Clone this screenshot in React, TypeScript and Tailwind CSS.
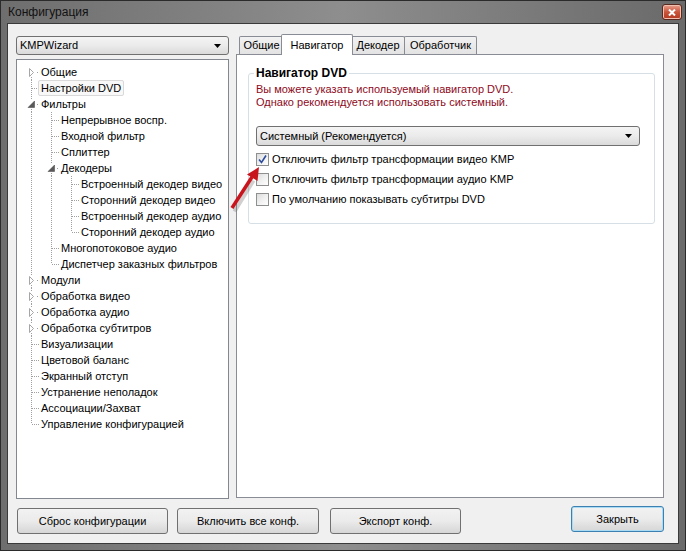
import React from 'react';

type Row = { label: string; level: number; expander?: 'open' | 'closed'; selected?: boolean };

const rows: Row[] = [
  { label: 'Общие', level: 0, expander: 'closed' },
  { label: 'Настройки DVD', level: 0, selected: true },
  { label: 'Фильтры', level: 0, expander: 'open' },
  { label: 'Непрерывное воспр.', level: 1 },
  { label: 'Входной фильтр', level: 1 },
  { label: 'Сплиттер', level: 1 },
  { label: 'Декодеры', level: 1, expander: 'open' },
  { label: 'Встроенный декодер видео', level: 2 },
  { label: 'Сторонний декодер видео', level: 2 },
  { label: 'Встроенный декодер аудио', level: 2 },
  { label: 'Сторонний декодер аудио', level: 2 },
  { label: 'Многопотоковое аудио', level: 1 },
  { label: 'Диспетчер заказных фильтров', level: 1 },
  { label: 'Модули', level: 0, expander: 'closed' },
  { label: 'Обработка видео', level: 0, expander: 'closed' },
  { label: 'Обработка аудио', level: 0, expander: 'closed' },
  { label: 'Обработка субтитров', level: 0, expander: 'closed' },
  { label: 'Визуализации', level: 0 },
  { label: 'Цветовой баланс', level: 0 },
  { label: 'Экранный отступ', level: 0 },
  { label: 'Устранение неполадок', level: 0 },
  { label: 'Ассоциации/Захват', level: 0 },
  { label: 'Управление конфигурацией', level: 0 },
];

// does row i have a later sibling at the same level?
function hasNext(i: number) {
  const lvl = rows[i].level;
  for (let j = i + 1; j < rows.length; j++) {
    if (rows[j].level < lvl) return false;
    if (rows[j].level === lvl) return true;
  }
  return false;
}

function ancestorAt(i: number, lvl: number) {
  for (let j = i - 1; j >= 0; j--) if (rows[j].level === lvl) return j;
  return -1;
}

const dot = '#a0a0a0';

function Guide({ on }: { on: boolean }) {
  return (
    <svg width="20" height="16" className="shrink-0">
      {on && <line x1="10.5" y1="0" x2="10.5" y2="16" stroke={dot} strokeDasharray="1 1" />}
    </svg>
  );
}

function Connector({ i }: { i: number }) {
  const r = rows[i];
  const next = hasNext(i);
  const top = i > 0;
  return (
    <svg width="20" height="16" className="shrink-0">
      {top && !r.expander && <line x1="10.5" y1="0" x2="10.5" y2="8" stroke={dot} strokeDasharray="1 1" />}
      {top && r.expander && <line x1="10.5" y1="0" x2="10.5" y2="3" stroke={dot} strokeDasharray="1 1" />}
      {next && <line x1="10.5" y1={r.expander ? 13 : 8} x2="10.5" y2="16" stroke={dot} strokeDasharray="1 1" />}
      {r.expander ? (
        <line x1="16" y1="8.5" x2="18" y2="8.5" stroke={dot} strokeDasharray="1 1" />
      ) : (
        <line x1="11" y1="8.5" x2="18" y2="8.5" stroke={dot} strokeDasharray="1 1" />
      )}
      {r.expander === 'closed' && <path d="M8.5 4.5 L12.5 8.5 L8.5 12.5 Z" fill="white" stroke="#a6a6a6" />}
      {r.expander === 'open' && <path d="M13.5 5 L13.5 11.5 L7 11.5 Z" fill="#595959" stroke="#404040" strokeWidth="0.5" />}
    </svg>
  );
}

function Tree() {
  return (
    <div className="mt-[4px] flex-1 border border-[#828790] bg-white pl-[4px] pt-[4px]">
      {rows.map((r, i) => (
        <div key={i} className="flex h-[16px] items-center">
          {Array.from({ length: r.level }).map((_, l) => (
            <Guide key={l} on={hasNext(ancestorAt(i, l))} />
          ))}
          <Connector i={i} />
          <span
            className={`-ml-[3px] whitespace-nowrap rounded-[2px] border px-[2px] leading-[14px] ${
              r.selected ? 'border-[#d9d9d9] bg-[#f8f8f8]' : 'border-transparent'
            }`}
          >
            {r.label}
          </span>
        </div>
      ))}
    </div>
  );
}

function Combo({ text, className }: { text: string; className: string }) {
  return (
    <div
      className={`flex items-center justify-between rounded-[3px] border border-[#707070] bg-gradient-to-b from-[#f4f4f4] via-[#ebebeb] to-[#dadada] pl-[3px] pr-[7px] ${className}`}
    >
      <span>{text}</span>
      <svg width="7" height="4">
        <path d="M0 0 H7 L3.5 4 Z" fill="#000" />
      </svg>
    </div>
  );
}

function Check({ checked, label }: { checked?: boolean; label: string }) {
  return (
    <div className="flex h-[20px] items-center">
      <div className="relative h-[13px] w-[13px] border border-[#8e8f8f] bg-gradient-to-br from-[#dcdcdc] via-[#f0f0f0] to-white">
        {checked && (
          <svg width="11" height="11" className="absolute left-0 top-0">
            <path d="M2 5.5 L4.5 8.5 L9 1.5" fill="none" stroke="#2c4c9c" strokeWidth="1.6" />
          </svg>
        )}
      </div>
      <span className="ml-[3px]">{label}</span>
    </div>
  );
}

function Tab({ label, active, w }: { label: string; active?: boolean; w: string }) {
  if (active)
    return (
      <div className={`relative z-10 -mx-[2px] -mb-px flex h-[21px] items-start justify-center rounded-t-[2px] border border-b-0 border-[#898c95] bg-white pt-[2px] ${w}`}>
        {label}
      </div>
    );
  return (
    <div className={`-mr-px mt-[2px] flex h-[18px] items-center justify-center rounded-t-[2px] border border-b-0 border-[#898c95] bg-gradient-to-b from-[#f2f2f2] to-[#e3e3e3] ${w}`}>
      {label}
    </div>
  );
}

function Button({ label, w, focus }: { label: string; w: string; focus?: boolean }) {
  return (
    <div
      className={`flex h-[26px] items-center justify-center rounded-[3px] border bg-gradient-to-b from-[#f2f2f2] via-[#ebebeb] to-[#d6d6d6] ${
        focus ? 'border-[#3c7fb1] shadow-[inset_0_0_0_1px_#a9dcf4]' : 'border-[#707070]'
      } ${w}`}
    >
      {label}
    </div>
  );
}

export default function App() {
  return (
    <div className="relative flex h-[551px] w-[686px] flex-col border border-[#2b2b2b] bg-gradient-to-r from-[#6e6e6e] via-[#8e8e8e] to-[#6a6a6a] font-['Liberation_Sans',Arial,sans-serif] text-[11px] text-black">
      {/* title bar */}
      <div className="flex h-[22px] shrink-0 items-center justify-between pl-[7px] pr-[3px]">
        <span className="text-[12px] text-[#111]">Конфигурация</span>
        <div className="flex h-[16px] w-[20px] items-center justify-center rounded-[3px] border border-[#5a2a20] bg-gradient-to-b from-[#e8a090] via-[#c9553a] to-[#b33a22] shadow-[inset_0_0_0_1px_#f0c0b0]">
          <svg width="8" height="7">
            <path d="M1 0.5 L7 6.5 M7 0.5 L1 6.5" stroke="white" strokeWidth="2" />
          </svg>
        </div>
      </div>

      {/* body */}
      <div className="mx-[6px] mb-[6px] flex flex-1 flex-col border border-[#3a3a3a] bg-[#f0f0f0] pr-[14px] pt-[10px]">
        <div className="flex h-[465px]">
          {/* left column */}
          <div className="ml-[8px] mt-[2px] flex w-[213px] flex-col">
            <Combo text="KMPWizard" className="h-[19px]" />
            <Tree />
          </div>

          {/* right: tabs */}
          <div className="ml-[7px] flex flex-1 flex-col">
            <div className="flex h-[20px] pl-[3px]">
              <Tab label="Общие" w="w-[45px]" />
              <Tab label="Навигатор" active w="w-[72px]" />
              <Tab label="Декодер" w="w-[54px]" />
              <Tab label="Обработчик" w="w-[73px]" />
            </div>
            <div className="mb-[1px] flex-1 border border-[#898c95] bg-white pl-[11px] pr-[8px] pt-[18px]">
              <div className="relative rounded-[3px] border border-[#d5dfe5] pb-[14px] pl-[7px] pr-[14px] pt-[9px]">
                <span className="absolute -top-[8px] left-[5px] bg-white px-[2px] text-[12px] font-bold leading-[14px]">Навигатор DVD</span>
                <div className="leading-[13px] text-[#8e0a1c]">
                  <div>Вы можете указать используемый навигатор DVD.</div>
                  <div>Однако рекомендуется использовать системный.</div>
                </div>
                <Combo text="Системный (Рекомендуется)" className="mt-[17px] h-[20px]" />
                <div className="mt-[3px]">
                  <Check checked label="Отключить фильтр трансформации видео KMP" />
                  <Check label="Отключить фильтр трансформации аудио KMP" />
                  <Check label="По умолчанию показывать субтитры DVD" />
                </div>
              </div>
            </div>
          </div>
        </div>

        {/* buttons */}
        <div className="mt-[9px] flex items-start pl-[9px]">
          <Button label="Сброс конфигурации" w="w-[151px]" />
          <div className="ml-[9px]">
            <Button label="Включить все конф." w="w-[142px]" />
          </div>
          <div className="ml-[11px]">
            <Button label="Экспорт конф." w="w-[131px]" />
          </div>
          <div className="-mt-[2px] ml-auto">
            <Button label="Закрыть" w="w-[93px]" focus />
          </div>
        </div>
      </div>

      {/* red pointer arrow */}
      <svg className="pointer-events-none absolute left-0 top-0" width="686" height="551">
        <line x1="232" y1="209" x2="251" y2="178" stroke="#777" strokeOpacity="0.35" strokeWidth="4" transform="translate(1.5,1.5)" />
        <line x1="231" y1="207" x2="251" y2="176" stroke="#c8141c" strokeWidth="3.5" />
        <path d="M258 166 L256.5 180 L246 173.5 Z" fill="#c8141c" />
      </svg>
    </div>
  );
}
